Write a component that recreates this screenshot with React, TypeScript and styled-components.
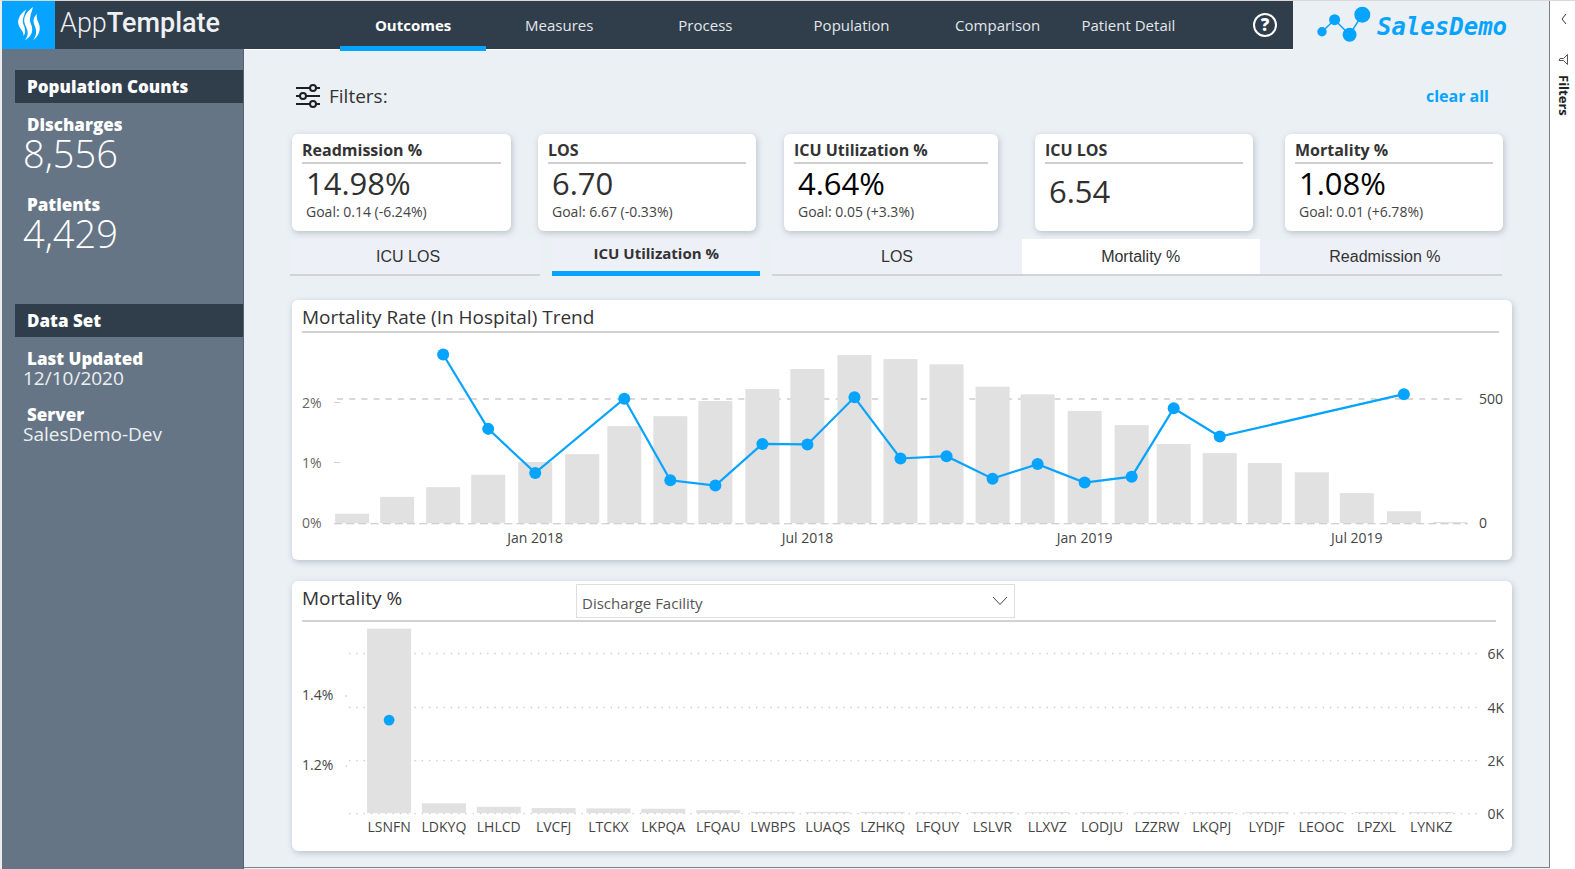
import React, { useState } from "react";
import styled, { createGlobalStyle, css } from "styled-components";

const accent = "#06a3ff";
const navy = "#303d4b";
const slate = "#667585";
const canvas = "#ebf0f5";
const sans = `"Open Sans", "Noto Sans", sans-serif`;

const GlobalStyle = createGlobalStyle`
  *, *::before, *::after { box-sizing: border-box; }
  body { margin: 0; background: #ffffff; font-family: ${sans}; color: #333333; }
  button, select { font: inherit; color: inherit; }
  button { border: 0; background: none; padding: 0; cursor: pointer; }
  h1, h2, p, dl, dd, dt { margin: 0; }
`;

const Shell = styled.div`
  display: flex;
  min-height: 100vh;
  border-top: 1px solid #d9d8d4;
  border-left: 2px solid #eceded;
`;

const Workspace = styled.div`
  flex: 1;
  min-width: 0;
  display: flex;
  flex-direction: column;
  background: ${canvas};
`;

const Header = styled.header`
  position: relative;
  z-index: 1;
  display: flex;
  height: 48px;
`;

const NavBar = styled.div`
  flex: 1;
  display: flex;
  background: ${navy};
`;

const LogoTile = styled.div`
  width: 53px;
  background: ${accent};
  svg { display: block; }
`;

const AppName = styled.h1`
  width: 285px;
  padding-left: 5px;
  font-family: Roboto, sans-serif;
  font-size: 27px;
  line-height: 45px;
  font-weight: 500;
  color: #eef0f2;
`;

const AppNameLight = styled.span`
  font-weight: 300;
`;

const Nav = styled.nav`
  flex: 1;
  display: flex;
`;

const NavLink = styled.a<{ $active?: boolean; $narrow?: boolean }>`
  flex: ${(p) => (p.$narrow ? 115 : 146)} 1 0;
  height: 50px;
  border-bottom: 5px solid ${(p) => (p.$active ? accent : "transparent")};
  color: ${(p) => (p.$active ? "#ffffff" : "#e3e7ea")};
  font-size: 15px;
  font-weight: ${(p) => (p.$active ? 700 : 400)};
  line-height: 49px;
  text-align: center;
  text-decoration: none;
  white-space: nowrap;
`;

const HelpSlot = styled.div`
  flex: 91 1 0;
  display: flex;
  align-items: center;
  justify-content: flex-end;
  padding-right: 16px;
`;

const HelpButton = styled.button`
  width: 24px;
  height: 24px;
  border: 2px solid #ffffff;
  border-radius: 50%;
  color: #ffffff;
  font-size: 17px;
  font-weight: 800;
  line-height: 20px;
`;

const Brand = styled.div`
  width: 257px;
  height: 49px;
  display: flex;
  padding-left: 23px;
  gap: 6px;
  background: ${canvas};
  border-right: 1px solid #7d7f81;
  svg { flex: none; }
`;

const BrandName = styled.span`
  color: ${accent};
  font-family: "DejaVu Sans Mono", monospace;
  font-size: 24px;
  font-style: italic;
  font-weight: 700;
  line-height: 53px;
`;

const Body = styled.div`
  flex: 1;
  display: flex;
`;

const Sidebar = styled.aside`
  width: 242px;
  padding: 21px 0 0 13px;
  background: ${slate};
  border-right: 1px solid #566373;
  color: #ffffff;
`;

const SideGroup = styled.section`
  height: 234px;
`;

const SideHeading = styled.h2`
  padding: 1px 0 0 12px;
  background: ${navy};
  font-size: 17px;
  font-weight: 800;
  line-height: 32px;
`;

const StatList = styled.dl<{ $roomy?: boolean }>`
  display: grid;
  row-gap: ${(p) => (p.$roomy ? 23 : 18)}px;
  padding: 12px 0 0 8px;
`;

const StatName = styled.dt`
  padding-left: 4px;
  font-size: 17px;
  font-weight: 800;
  line-height: 20px;
`;

const StatBig = styled.dd`
  font-size: 38px;
  font-weight: 300;
  line-height: 37px;
`;

const StatText = styled.dd`
  font-size: 19px;
  line-height: 18px;
  color: #eceff2;
`;

const Main = styled.main`
  flex: 1;
  min-width: 0;
  padding: 32px 37px 16px 48px;
  border-top: 1px solid #fbfcfd;
  border-right: 1px solid #7d7f81;
  border-bottom: 1px solid #7b868f;
  margin-bottom: 1px;
`;

const FilterBar = styled.div`
  display: flex;
  align-items: center;
  height: 28px;
  padding: 0 23px 0 4px;
  margin-bottom: 24px;
`;

const FilterTitle = styled.span`
  margin-left: 9px;
  font-size: 19px;
  line-height: 28px;
`;

const ClearButton = styled.button`
  margin-left: auto;
  color: ${accent};
  font-size: 16px;
  font-weight: 700;
`;

const CardGrid = styled.div`
  display: grid;
  grid-template-columns: 219fr 27fr 218fr 28fr 214fr 37fr 218fr 32fr 218fr;
  margin-right: 9px;
`;

const raised = css`
  background: #ffffff;
  border-radius: 6px;
  box-shadow: 1px 2px 6px rgba(90, 105, 120, 0.35);
`;

const Card = styled.article<{ $column: number }>`
  grid-column: ${(p) => p.$column};
  min-width: 0;
  height: 97px;
  padding: 4px 10px;
  white-space: nowrap;
  ${raised}
`;

const CardTitle = styled.h2`
  border-bottom: 2px solid #cfcfcf;
  font-size: 16px;
  font-weight: 700;
  line-height: 24px;
`;

const CardValue = styled.p<{ $alone?: boolean; $strong?: boolean }>`
  padding: ${(p) => (p.$alone ? 8 : 0)}px 0 0 4px;
  font-size: 31px;
  line-height: 38px;
  color: ${(p) => (p.$strong ? "#000000" : "#303030")};
`;

const CardGoal = styled.p`
  padding-left: 4px;
  font-size: 14px;
  line-height: 19px;
  color: #444444;
`;

const Tabs = styled.div`
  display: grid;
  grid-template-columns: 250fr 12fr 208fr 12fr 249fr 238fr 242fr;
  margin: 8px 10px 24px -2px;
`;

const Tab = styled.button<{ $column: number; $look: "plain" | "current" | "hover" }>`
  grid-column: ${(p) => p.$column};
  height: 37px;
  border-bottom: 2px solid #d0d3d7;
  background: #edf0f6;
  font-family: "Liberation Sans", Arial, sans-serif;
  font-size: 16px;
  line-height: 34px;
  white-space: nowrap;
  &:first-child { padding-right: 14px; }
  &:last-child { padding-left: 8px; }
  ${(p) =>
    p.$look === "current" &&
    css`
      border-bottom: 5px solid ${accent};
      font-family: ${sans};
      font-size: 15px;
      font-weight: 700;
      line-height: 28px;
      padding-bottom: 4px;
    `}
  ${(p) =>
    p.$look === "hover" &&
    css`
      background: #ffffff;
    `}
`;

const Panel = styled.section`
  ${raised}
  & + & { margin-top: 21px; }
  > svg { display: block; width: 100%; height: auto; }
`;

const PanelHead = styled.div<{ $tall?: boolean }>`
  display: flex;
  align-items: flex-start;
  height: ${(p) => (p.$tall ? 41 : 33)}px;
  margin: 0 ${(p) => (p.$tall ? 16 : 13)}px 0 10px;
  padding-top: 3px;
  border-bottom: 2px solid #d2d2d2;
`;

const PanelTitle = styled.h2`
  flex: 0 0 274px;
  font-size: 19px;
  font-weight: 400;
  line-height: 28px;
  white-space: nowrap;
`;

const SelectBox = styled.label`
  position: relative;
  flex: 0 1 439px;
  height: 34px;
  color: #555555;
  svg {
    position: absolute;
    right: 7px;
    top: 12px;
    width: 16px;
    height: 10px;
    pointer-events: none;
  }
`;

const Select = styled.select`
  appearance: none;
  width: 100%;
  height: 34px;
  padding: 4px 30px 0 5px;
  border: 1px solid #dedede;
  border-radius: 0;
  background: #ffffff;
  font-size: 15px;
`;

const AxisText = styled.text<{ $dim?: boolean }>`
  font-family: ${sans};
  font-size: 14px;
  fill: ${(p) => (p.$dim ? "#666666" : "#444444")};
`;

const Rail = styled.aside`
  width: 25px;
  display: flex;
  flex-direction: column;
  align-items: center;
  padding: 10px 0 0 2px;
  background: #ffffff;
`;

const RailToggle = styled.button`
  height: 16px;
  margin-bottom: 27px;
  svg { display: block; }
`;

const RailLabel = styled.span`
  margin-top: 10px;
  writing-mode: vertical-rl;
  font-size: 13px;
  line-height: 16px;
  font-weight: 700;
  color: #222222;
`;

const navItems = ["Outcomes", "Measures", "Process", "Population", "Comparison", "Patient Detail"];

const metrics = [
  { name: "Readmission %", value: "14.98%", goal: "Goal: 0.14 (-6.24%)" },
  { name: "LOS", value: "6.70", goal: "Goal: 6.67 (-0.33%)" },
  { name: "ICU Utilization %", value: "4.64%", goal: "Goal: 0.05 (+3.3%)", strong: true },
  { name: "ICU LOS", value: "6.54" },
  { name: "Mortality %", value: "1.08%", goal: "Goal: 0.01 (+6.78%)", strong: true },
];

const tabs = [
  { name: "ICU LOS", column: 1 },
  { name: "ICU Utilization %", column: 3 },
  { name: "LOS", column: 5 },
  { name: "Mortality %", column: 6 },
  { name: "Readmission %", column: 7 },
];

// Monthly discharges and in-hospital mortality rate, from September 2017.
const trend: { count: number; rate?: number }[] = [
  { count: 38 },
  { count: 106 },
  { count: 145, rate: 2.785 },
  { count: 195, rate: 1.557 },
  { count: 246, rate: 0.83 },
  { count: 278 },
  { count: 391, rate: 2.055 },
  { count: 431, rate: 0.707 },
  { count: 492, rate: 0.62 },
  { count: 540, rate: 1.308 },
  { count: 621, rate: 1.3 },
  { count: 677, rate: 2.078 },
  { count: 661, rate: 1.068 },
  { count: 640, rate: 1.106 },
  { count: 550, rate: 0.735 },
  { count: 519, rate: 0.975 },
  { count: 452, rate: 0.67 },
  { count: 395, rate: 0.768 },
  { count: 319, rate: 1.896 },
  { count: 282, rate: 1.43 },
  { count: 242 },
  { count: 205 },
  { count: 121 },
  { count: 48, rate: 2.13 },
  { count: 5 },
];

const facilities: [string, number][] = [
  ["LSNFN", 6930], ["LDKYQ", 370], ["LHLCD", 240], ["LVCFJ", 190], ["LTCKX", 180],
  ["LKPQA", 165], ["LFQAU", 110], ["LWBPS", 50], ["LUAQS", 50], ["LZHKQ", 50],
  ["LFQUY", 45], ["LSLVR", 45], ["LLXVZ", 40], ["LODJU", 40], ["LZZRW", 40],
  ["LKQPJ", 40], ["LYDJF", 40], ["LEOOC", 40], ["LPZXL", 40], ["LYNKZ", 40],
];

const DAY = 86400000;
const origin = Date.UTC(2018, 0, 1);
const monthX = (index: number) =>
  Math.round(243 + (1.504 * (Date.UTC(2017, 8 + index, 1) - origin)) / DAY);

function TrendChart() {
  const base = 190;
  const countY = (n: number) => base - n * 0.248;
  const rateY = (r: number) => base - r * 60.5;
  const points = trend
    .map((m, i) => ({ x: monthX(i), rate: m.rate }))
    .filter((p) => p.rate !== undefined)
    .map((p) => ({ x: p.x, y: rateY(p.rate as number) }));
  const months: [number, string][] = [[4, "Jan 2018"], [10, "Jul 2018"], [16, "Jan 2019"], [22, "Jul 2019"]];
  return (
    <svg viewBox="0 0 1219 227" role="img" aria-label="Mortality rate trend by month">
      <path d="M45 66H1175" stroke="#d9d9d9" strokeWidth="2" strokeDasharray="6 6.15" />
      <path d="M42 69.5H48M42 129.5H48" stroke="#d0d0d0" />
      {trend.map((m, i) => (
        <rect key={i} x={monthX(i) - 17} y={countY(m.count)} width="34" height={m.count * 0.248} fill="#e1e1e1" />
      ))}
      <path d="M42 190.5H1175" stroke="#c2c2c2" strokeDasharray="8 4.15" />
      <polyline points={points.map((p) => `${p.x},${p.y}`).join(" ")} fill="none" stroke={accent} strokeWidth="2.2" />
      {points.map((p) => (
        <circle key={p.x} cx={p.x} cy={p.y} r="6" fill={accent} />
      ))}
      {[0, 1, 2].map((n) => (
        <AxisText key={n} $dim x="10" y={195 - n * 60}>{n}%</AxisText>
      ))}
      <AxisText x="1186" y="71">500</AxisText>
      <AxisText x="1186" y="195">0</AxisText>
      {months.map(([i, label]) => (
        <AxisText key={label} x={monthX(i)} y="210" textAnchor="middle">{label}</AxisText>
      ))}
    </svg>
  );
}

function FacilityChart() {
  const base = 191;
  return (
    <svg viewBox="0 0 1219 229" role="img" aria-label="Mortality by discharge facility">
      {[0, 2, 4, 6].map((k) => {
        const y = base + 1 - k * 26.6;
        return (
          <g key={k}>
            <path d={`M57 ${Math.round(y) - 0.5}H1184`} stroke="#cccccc" strokeWidth="1.4" strokeDasharray="1.4 5.86" />
            <AxisText x="1211" y={Math.round(y) + 5} textAnchor="end">{k}K</AxisText>
          </g>
        );
      })}
      <path d="M53.5 74H55M53.5 144H55" stroke="#cccccc" strokeWidth="1.4" />
      {facilities.map(([name, count], i) => {
        const x = 97 + i * 54.8;
        const h = count * 0.0266;
        return (
          <g key={name}>
            <rect x={x - 22} y={base - h} width="44" height={h} fill="#e1e1e1" />
            <AxisText x={x} y="210" textAnchor="middle">{name}</AxisText>
          </g>
        );
      })}
      <circle cx="97" cy="98" r="5.4" fill={accent} />
      <AxisText x="10" y="78">1.4%</AxisText>
      <AxisText x="10" y="148">1.2%</AxisText>
    </svg>
  );
}

function FlameLogo() {
  return (
    <svg width="53" height="48" viewBox="0 0 53 48" fill="#ffffff" aria-hidden="true">
      <path d="M24 8.500C18 13 14.500 19 17 25C18.500 28.500 22 30.500 21.500 35C24.500 31 22.800 27 21.500 23.500C19.800 19 22 15 24 8.500Z" />
      <path d="M31 6C24 11 20.500 17 23 23.500C25 28.500 28 32 23 39.500C30.500 34.500 31.500 29 29 23C26.500 17.500 29.500 12 31 6Z" />
      <path d="M35 13C30.500 17 31 21 33 25.500C34.500 29.500 35 34 31 39.500C37.500 34.500 39 27.500 36.800 22.500C35.500 19.500 34 16.500 35 13Z" />
    </svg>
  );
}

function BrandMark() {
  return (
    <svg width="55" height="48" viewBox="0 0 55 48" fill={accent} aria-hidden="true">
      <path d="M6 30.700L18.600 18.700L33.600 33.700L46.300 13.700" fill="none" stroke={accent} strokeWidth="1.500" />
      <circle cx="6" cy="30.700" r="4.700" />
      <circle cx="18.600" cy="18.700" r="5.500" />
      <circle cx="33.600" cy="33.700" r="7" />
      <circle cx="46.300" cy="13.700" r="8" />
    </svg>
  );
}

function SlidersIcon() {
  return (
    <svg width="24" height="26" viewBox="0 0 24 26" fill={canvas} stroke="#1f1f1f" strokeWidth="2" aria-hidden="true">
      <path d="M0 5H24M0 13H24M0 21H24" />
      <circle cx="17" cy="5" r="3" />
      <circle cx="7" cy="13" r="3" />
      <circle cx="17" cy="21" r="3" />
    </svg>
  );
}

export default function App() {
  const [tab, setTab] = useState("ICU Utilization %");
  return (
    <>
      <GlobalStyle />
      <Shell>
        <Workspace>
          <Header>
            <NavBar>
              <LogoTile><FlameLogo /></LogoTile>
              <AppName><AppNameLight>App</AppNameLight>Template</AppName>
              <Nav>
                {navItems.map((item, i) => (
                  <NavLink key={item} href="#" $active={i === 0} $narrow={i === 5}>{item}</NavLink>
                ))}
                <HelpSlot><HelpButton aria-label="Help">?</HelpButton></HelpSlot>
              </Nav>
            </NavBar>
            <Brand><BrandMark /><BrandName>SalesDemo</BrandName></Brand>
          </Header>
          <Body>
            <Sidebar>
              <SideGroup>
                <SideHeading>Population Counts</SideHeading>
                <StatList $roomy>
                  <div><StatName>Discharges</StatName><StatBig>8,556</StatBig></div>
                  <div><StatName>Patients</StatName><StatBig>4,429</StatBig></div>
                </StatList>
              </SideGroup>
              <SideGroup>
                <SideHeading>Data Set</SideHeading>
                <StatList>
                  <div><StatName>Last Updated</StatName><StatText>12/10/2020</StatText></div>
                  <div><StatName>Server</StatName><StatText>SalesDemo-Dev</StatText></div>
                </StatList>
              </SideGroup>
            </Sidebar>
            <Main>
              <FilterBar>
                <SlidersIcon />
                <FilterTitle>Filters:</FilterTitle>
                <ClearButton>clear all</ClearButton>
              </FilterBar>
              <CardGrid>
                {metrics.map((m, i) => (
                  <Card key={m.name} $column={i * 2 + 1}>
                    <CardTitle>{m.name}</CardTitle>
                    <CardValue $alone={!m.goal} $strong={m.strong}>{m.value}</CardValue>
                    {m.goal && <CardGoal>{m.goal}</CardGoal>}
                  </Card>
                ))}
              </CardGrid>
              <Tabs role="tablist">
                {tabs.map((t) => (
                  <Tab
                    key={t.name}
                    role="tab"
                    aria-selected={t.name === tab}
                    $column={t.column}
                    $look={t.name === tab ? "current" : t.name === "Mortality %" ? "hover" : "plain"}
                    onClick={() => setTab(t.name)}
                  >
                    {t.name}
                  </Tab>
                ))}
              </Tabs>
              <Panel>
                <PanelHead><PanelTitle>Mortality Rate (In Hospital) Trend</PanelTitle></PanelHead>
                <TrendChart />
              </Panel>
              <Panel>
                <PanelHead $tall>
                  <PanelTitle>Mortality %</PanelTitle>
                  <SelectBox>
                    <Select aria-label="Group by"><option>Discharge Facility</option></Select>
                    <svg viewBox="0 0 16 10" fill="none" stroke="#444444" aria-hidden="true">
                      <path d="M1 1L8 8.500L15 1" />
                    </svg>
                  </SelectBox>
                </PanelHead>
                <FacilityChart />
              </Panel>
            </Main>
          </Body>
        </Workspace>
        <Rail>
          <RailToggle aria-label="Expand filters">
            <svg width="6" height="12" viewBox="0 0 6 12" fill="none" stroke="#333333" aria-hidden="true">
              <path d="M5 1L1 6L5 11" />
            </svg>
          </RailToggle>
          <svg width="11" height="11" viewBox="0 0 11 11" fill="none" stroke="#555555" aria-hidden="true">
            <path d="M9.500 0.500V10.500L5.500 6.500H1L2 4.500H5.500Z" />
          </svg>
          <RailLabel>Filters</RailLabel>
        </Rail>
      </Shell>
    </>
  );
}
